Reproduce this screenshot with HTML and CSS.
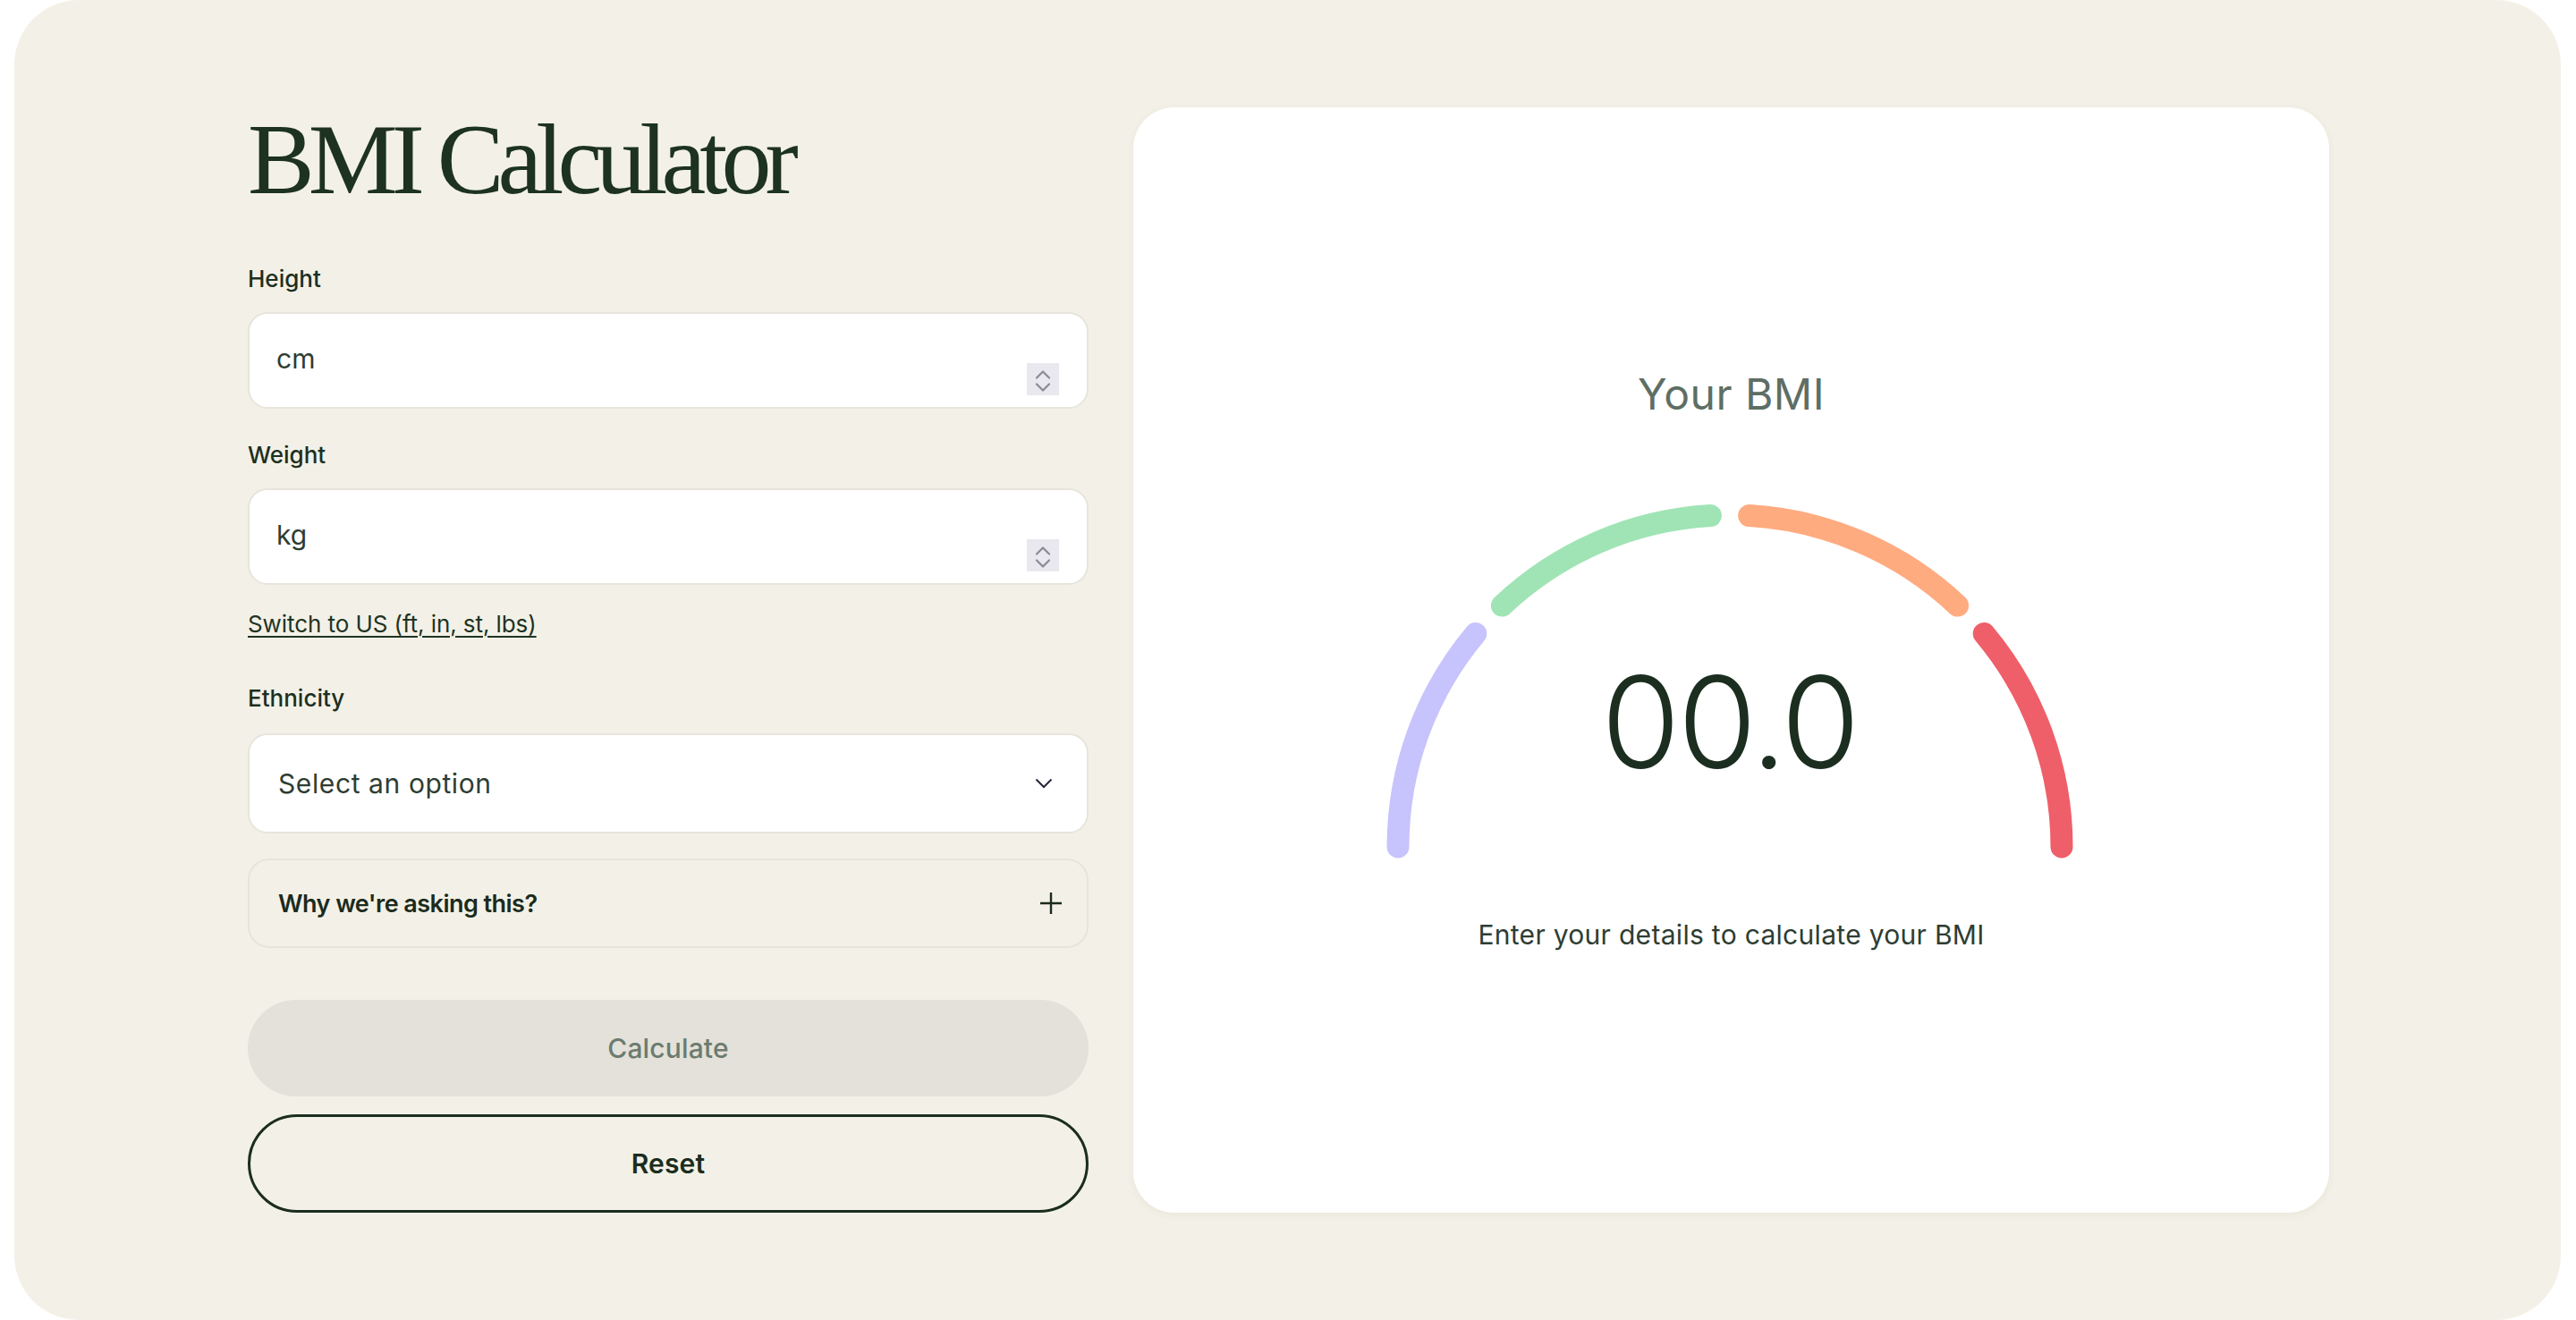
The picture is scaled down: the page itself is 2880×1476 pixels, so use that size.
FILE: index.html
```html
<!DOCTYPE html>
<html lang="en">
<head>
<meta charset="utf-8">
<title>BMI Calculator</title>
<link rel="stylesheet" href="styles.css">
</head>
<body>
<div class="page">
  <main class="calc">
    <section class="form">
      <h1 class="title">BMI Calculator</h1>

      <div class="label label-height">Height</div>
      <div class="input">
        <span class="placeholder">cm</span>
        <span class="spinner">
          <svg width="36" height="36" viewBox="0 0 36 36"><path d="M11 21.5 L18 14.5 L25 21.5" transform="translate(0,-5)" fill="none" stroke="#8b8a92" stroke-width="2.2" stroke-linecap="round" stroke-linejoin="round"/><path d="M11 14.5 L18 21.5 L25 14.5" transform="translate(0,9)" fill="none" stroke="#8b8a92" stroke-width="2.2" stroke-linecap="round" stroke-linejoin="round"/></svg>
        </span>
      </div>

      <div class="label label-weight">Weight</div>
      <div class="input">
        <span class="placeholder">kg</span>
        <span class="spinner">
          <svg width="36" height="36" viewBox="0 0 36 36"><path d="M11 21.5 L18 14.5 L25 21.5" transform="translate(0,-5)" fill="none" stroke="#8b8a92" stroke-width="2.2" stroke-linecap="round" stroke-linejoin="round"/><path d="M11 14.5 L18 21.5 L25 14.5" transform="translate(0,9)" fill="none" stroke="#8b8a92" stroke-width="2.2" stroke-linecap="round" stroke-linejoin="round"/></svg>
        </span>
      </div>

      <a class="switch" href="#">Switch to US (ft, in, st, lbs)</a>

      <div class="label label-eth">Ethnicity</div>
      <div class="select">
        <span class="select-text">Select an option</span>
        <svg class="chev" width="20" height="12" viewBox="0 0 20 12"><path d="M1.5 1.5 L10 10 L18.5 1.5" fill="none" stroke="#29253d" stroke-width="2"/></svg>
      </div>

      <div class="why">
        <span class="why-text">Why we're asking this?</span>
        <svg class="plus" width="26" height="26" viewBox="0 0 26 26"><path d="M13 1 V25 M1 13 H25" fill="none" stroke="#1b2b1d" stroke-width="2.4"/></svg>
      </div>

      <button class="btn btn-calc" type="button">Calculate</button>
      <button class="btn btn-reset" type="button">Reset</button>
    </section>

    <section class="card">
      <div class="card-title">Your BMI</div>
      <div class="gauge">
        <svg class="gauge-svg" width="780" height="400" viewBox="0 0 780 400">
          <path d="M19 385 A371 371 0 0 1 105.8 146.5" fill="none" stroke="#c7c3fc" stroke-width="25" stroke-linecap="round"/>
          <path d="M135.4 115.1 A371 371 0 0 1 368.4 14.6" fill="none" stroke="#a0e4b5" stroke-width="25" stroke-linecap="round"/>
          <path d="M411.6 14.6 A371 371 0 0 1 644.6 115.1" fill="none" stroke="#ffab80" stroke-width="25" stroke-linecap="round"/>
          <path d="M674.2 146.5 A371 371 0 0 1 761 385" fill="none" stroke="#ef5f69" stroke-width="25" stroke-linecap="round"/>
        </svg>
        <div class="bmi-value">00.0</div>
      </div>
      <div class="card-note">Enter your details to calculate your BMI</div>
    </section>
  </main>
</div>
</body>
</html>
```

FILE: styles.css
```css
* {
  box-sizing: border-box;
}

html, body {
  margin: 0;
  padding: 0;
  background: #ffffff;
}

body {
  font-family: "Inter", "Noto Sans", sans-serif;
  color: #1d2f21;
}

.page {
  margin: 0 17px 0 16px;
  height: 1476px;
  background: #f3f1e7;
  border-radius: 72px;
}

.calc {
  display: grid;
  grid-template-columns: 940px 1337px;
  column-gap: 50px;
  padding: 120px 259px 118px 261px;
  align-items: stretch;
}

/* ---------- Left form ---------- */
.form {
  display: flex;
  flex-direction: column;
}

.title {
  margin: 2px 0 0 0;
  height: 112px;
  font-family: "Liberation Serif", "Times New Roman", serif;
  font-weight: 400;
  font-size: 112px;
  line-height: 112px;
  letter-spacing: -0.062em;
  color: #1d3220;
  white-space: nowrap;
}

.label {
  font-size: 26px;
  font-weight: 500;
  line-height: 32px;
  letter-spacing: 0;
  color: #1d2f21;
  margin-bottom: 21px;
}

.label-height {
  margin-top: 62px;
}

.label-weight {
  margin-top: 36px;
}

.label-eth {
  margin-top: 51px;
  margin-bottom: 23px;
}

.input {
  height: 108px;
  background: #ffffff;
  border: 2px solid #e7e4dc;
  border-radius: 22px;
  display: flex;
  align-items: center;
  justify-content: space-between;
  padding: 0 31px 0 30px;
}

.placeholder {
  font-size: 30px;
  letter-spacing: 0;
  color: #2e3d33;
  margin-top: -4px;
}

.spinner {
  align-self: flex-end;
  margin-bottom: 13px;
  width: 36px;
  height: 36px;
  background: #e9e8ef;
  display: flex;
}

.switch {
  margin-top: 28px;
  align-self: flex-start;
  font-size: 26px;
  line-height: 32px;
  letter-spacing: -0.003em;
  color: #1f3323;
  text-decoration: underline;
  text-decoration-thickness: 2px;
  text-underline-offset: 4px;
}

.select {
  height: 112px;
  background: #ffffff;
  border: 2px solid #e7e4dc;
  border-radius: 22px;
  display: flex;
  align-items: center;
  justify-content: space-between;
  padding: 0 38px 0 32px;
}

.select-text {
  font-size: 30px;
  letter-spacing: 0.02em;
  color: #2e3d33;
}

.why {
  margin-top: 28px;
  height: 100px;
  border: 2px solid #e7e4da;
  border-radius: 24px;
  display: flex;
  align-items: center;
  justify-content: space-between;
  padding: 0 27px 0 32px;
}

.why-text {
  font-size: 27px;
  font-weight: 600;
  letter-spacing: -0.02em;
  color: #1b2b1d;
}

.btn {
  display: block;
  width: 100%;
  border-radius: 999px;
  font-family: "Inter", "Noto Sans", sans-serif;
  font-size: 30px;
  font-weight: 500;
  letter-spacing: 0.005em;
  cursor: pointer;
}

.btn-calc {
  margin-top: 58px;
  height: 108px;
  background: #e3e1d9;
  border: none;
  color: #6c7b70;
}

.btn-reset {
  margin-top: 20px;
  height: 110px;
  background: transparent;
  border: 3px solid #1b2d1e;
  color: #1b2d1e;
  font-weight: 600;
}

/* ---------- Right card ---------- */
.card {
  background: #ffffff;
  border-radius: 46px;
  box-shadow: 0 2px 10px rgba(60, 60, 40, 0.06);
  display: flex;
  flex-direction: column;
  align-items: center;
  justify-content: center;
}

.card-title {
  font-size: 48px;
  line-height: 56px;
  font-weight: 400;
  letter-spacing: 0.01em;
  color: #5e6e65;
  margin-bottom: 93px;
}

.gauge {
  position: relative;
  width: 780px;
  height: 400px;
  margin-bottom: 65px;
  margin-right: 4px;
}

.gauge-svg {
  display: block;
}

.bmi-value {
  position: absolute;
  left: 0;
  right: 0;
  top: 173px;
  text-align: center;
  font-size: 143px;
  line-height: 143px;
  font-weight: 300;
  letter-spacing: -0.02em;
  color: #1b2e20;
}

.card-note {
  font-size: 30px;
  line-height: 36px;
  letter-spacing: 0.01em;
  color: #2e3d33;
}
```
